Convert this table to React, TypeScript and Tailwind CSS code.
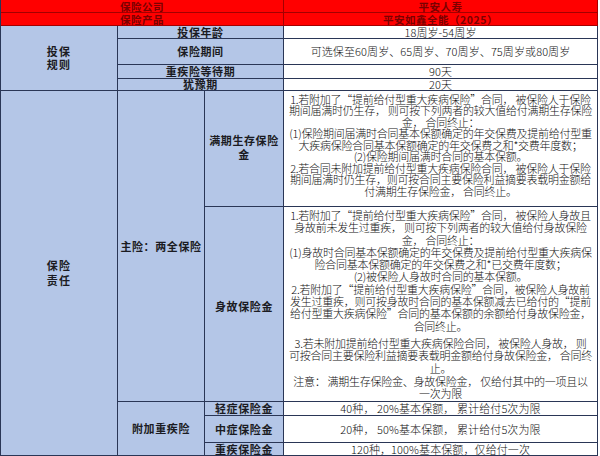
import React from "react";

const BD = "border-r border-b border-[#2a3656]";
const RED = "bg-[#ff0000] border-r border-b border-[#a30000] flex items-center justify-center text-[10.5px] font-bold text-[#7a0000] leading-[11px] tracking-[0.5px]";
const BLUE = `bg-[#b4c6e7] ${BD} flex items-center justify-center text-center text-[11px] font-bold text-[#1b1b22] tracking-[0.6px]`;
const WHITE = `bg-white ${BD} flex items-center justify-center text-center text-[11px] font-light text-[#111111] tracking-[0.1px] leading-none`;

const man = [
  "1.若附加了“提前给付型重大疾病保险”合同， 被保险人于保险",
  "期间届满时仍生存， 则可按下列两者的较大值给付满期生存保险",
  "金， 合同终止：",
  "(1)保险期间届满时合同基本保额确定的年交保费及提前给付型重",
  "大疾病保险合同基本保额确定的年交保费之和*交费年度数；",
  "(2)保险期间届满时合同的基本保额。",
  "2.若合同未附加提前给付型重大疾病保险合同， 被保险人于保险",
  "期间届满时仍生存，则可按合同主要保险利益摘要表载明金额给",
  "付满期生存保险金， 合同终止。",
];

const shen: [string, string][] = [
  ["1.若附加了“提前给付型重大疾病保险”合同， 被保险人身故且", ""],
  ["身故前未发生过重疾， 则可按下列两者的较大值给付身故保险", ""],
  ["金， 合同终止：", ""],
  ["(1)身故时合同基本保额确定的年交保费及提前给付型重大疾病保", ""],
  ["险合同基本保额确定的年交保费之和*已交费年度数；", ""],
  ["(2)被保险人身故时合同的基本保额。", ""],
  ["2.若附加了“提前给付型重大疾病保险”合同，被保险人身故前", ""],
  ["发生过重疾，则可按身故时合同的基本保额减去已给付的“提前", ""],
  ["给付型重大疾病保险”合同的基本保额的余额给付身故保险金，", ""],
  ["合同终止。", ""],
  ["3.若未附加提前给付型重大疾病保险合同， 被保险人身故， 则", "mt-[5px]"],
  ["可按合同主要保险利益摘要表载明金额给付身故保险金， 合同终", ""],
  ["止。", ""],
  ["注意： 满期生存保险金、身故保险金， 仅给付其中的一项且以", "mt-[1px]"],
  ["一次为限", ""],
];

export default function App() {
  return (
    <div className="w-[600px] h-[456px] bg-white overflow-hidden font-['Noto_Sans_CJK_SC','Liberation_Sans',sans-serif]">
      <div className="grid w-[597px] grid-cols-[117px_87px_79px_314px] grid-rows-[13px_13px_13px_26px_14px_12px_116px_195px_14px_27px_13px] border-l border-[#2a3656]">
        {/* header */}
        <div className={`${RED} col-span-3`}>保险公司</div>
        <div className={RED}>平安人寿</div>
        <div className={`${RED} col-span-3`}>保险产品</div>
        <div className={RED}>平安如鑫全能（2025）</div>

        {/* 投保规则 */}
        <div className={`${BLUE} row-span-4 leading-[13px] tracking-[1.2px] text-[11.5px]`}>
          投保<br />规则
        </div>
        <div className={`${BLUE} col-span-2 leading-none`}>投保年龄</div>
        <div className={WHITE}>18周岁-54周岁</div>
        <div className={`${BLUE} col-span-2 leading-none`}>保险期间</div>
        <div className={WHITE}>可选保至60周岁、65周岁、70周岁、75周岁或80周岁</div>
        <div className={`${BLUE} col-span-2 leading-none`}>重疾险等待期</div>
        <div className={WHITE}>90天</div>
        <div className={`${BLUE} col-span-2 leading-none`}>犹豫期</div>
        <div className={WHITE}>20天</div>

        {/* 保险责任 */}
        <div className={`${BLUE} row-span-5 leading-[15px] tracking-[1.2px] text-[11.5px]`}>
          保险<br />责任
        </div>
        <div className={`${BLUE} row-span-2 leading-none`}>主险：两全保险</div>
        <div className={`${BLUE} leading-[14px] pb-[4px]`}>
          满期生存保险<br />金
        </div>
        <div className={`bg-white ${BD} flex flex-col items-center justify-center pb-[6px] text-[11px] font-light text-[#111111] tracking-[-0.25px] leading-[11.5px] overflow-hidden`}>
          {man.map((l, i) => (
            <div key={i} className="whitespace-nowrap">{l}</div>
          ))}
        </div>
        <div className={`${BLUE} leading-none pt-[4px]`}>身故保险金</div>
        <div className={`bg-white ${BD} flex flex-col items-center justify-start pt-[2px] text-[11px] font-light text-[#111111] tracking-[-0.25px] leading-[12.3px] overflow-hidden`}>
          {shen.map(([l, c], i) => (
            <div key={i} className={`whitespace-nowrap ${c}`}>{l}</div>
          ))}
        </div>

        {/* 附加重疾险 */}
        <div className={`${BLUE} row-span-3 leading-none`}>附加重疾险</div>
        <div className={`${BLUE} leading-none`}>轻症保险金</div>
        <div className={WHITE}>40种， 20%基本保额， 累计给付5次为限</div>
        <div className={`${BLUE} leading-none`}>中症保险金</div>
        <div className={WHITE}>20种， 50%基本保额， 累计给付5次为限</div>
        <div className={`${BLUE} leading-none`}>重疾保险金</div>
        <div className={WHITE}>120种，100%基本保额，仅给付一次</div>
      </div>
    </div>
  );
}
